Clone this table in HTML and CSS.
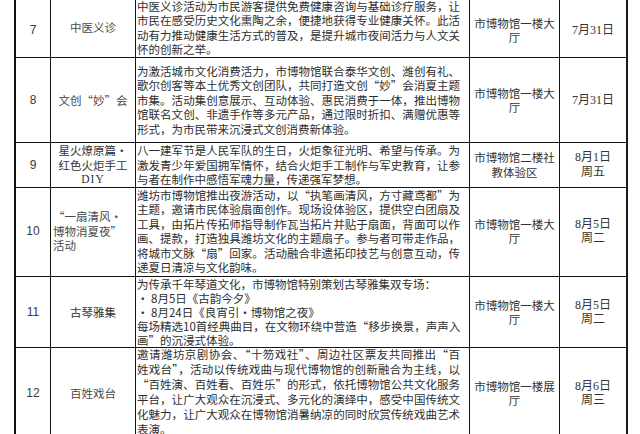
FILE: index.html
```html
<!DOCTYPE html>
<html lang="zh-CN">
<head>
<meta charset="utf-8">
<title>活动安排</title>
<link rel="stylesheet" href="styles.css">
</head>
<body>
<div class="sheet">
  <div class="row r7">
    <div class="c num shift">7</div>
    <div class="c name shift">中医义诊</div>
    <div class="c desc">
      <span class="f">中医义诊活动为市民游客提供免费健康咨询与基础诊疗服务，让</span>
      <span class="f">市民在感受历史文化熏陶之余，便捷地获得专业健康关怀。此活</span>
      <span class="f">动有力推动健康生活方式的普及，是提升城市夜间活力与人文关</span>
      <span>怀的创新之举。</span>
    </div>
    <div class="c loc shift">市博物馆一楼大<br>厅</div>
    <div class="c date shift">7月31日</div>
  </div>
  <div class="row r8">
    <div class="c num">8</div>
    <div class="c name">文创“妙”会</div>
    <div class="c desc">
      <span class="f">为激活城市文化消费活力，市博物馆联合泰华文创、潍创有礼、</span>
      <span class="f">歌尔创客等本土优秀文创团队，共同打造文创“妙”会消夏主题</span>
      <span class="f">市集。活动集创意展示、互动体验、惠民消费于一体，推出博物</span>
      <span class="f">馆联名文创、非遗手作等多元产品，通过限时折扣、满赠优惠等</span>
      <span>形式，为市民带来沉浸式文创消费新体验。</span>
    </div>
    <div class="c loc">市博物馆一楼大<br>厅</div>
    <div class="c date">7月31日</div>
  </div>
  <div class="row r9">
    <div class="c num">9</div>
    <div class="c name serif">星火燎原篇·<br>红色火炬手工<br><span class="latin">DIY</span></div>
    <div class="c desc">
      <span class="f">八一建军节是人民军队的生日，火炬象征光明、希望与传承。为</span>
      <span class="f">激发青少年爱国拥军情怀，结合火炬手工制作与军史教育，让参</span>
      <span>与者在制作中感悟军魂力量，传递强军梦想。</span>
    </div>
    <div class="c loc">市博物馆二楼社<br>教体验区</div>
    <div class="c date">8月1日<br>周五</div>
  </div>
  <div class="row r10">
    <div class="c num">10</div>
    <div class="c name left">“一扇清风·<br>博物消夏夜”<br>活动</div>
    <div class="c desc">
      <span class="f">潍坊市博物馆推出夜游活动，以“执笔画清风，方寸藏鸢都”为</span>
      <span class="f">主题，邀请市民体验扇面创作。现场设体验区，提供空白团扇及</span>
      <span class="f">工具，由拓片传拓师指导制作瓦当拓片并贴于扇面，背面可以作</span>
      <span class="f">画、提款，打造独具潍坊文化的主题扇子。参与者可带走作品，</span>
      <span class="f">将城市文脉“扇”回家。活动融合非遗拓印技艺与创意互动，传</span>
      <span>递夏日清凉与文化韵味。</span>
    </div>
    <div class="c loc">市博物馆一楼大<br>厅</div>
    <div class="c date">8月5日<br>周二</div>
  </div>
  <div class="row r11">
    <div class="c num">11</div>
    <div class="c name serif">古琴雅集</div>
    <div class="c desc">
      <span>为传承千年琴道文化，市博物馆特别策划古琴雅集双专场：</span>
      <span>• 8月5日《古韵今夕》</span>
      <span>• 8月24日《良宵引·博物馆之夜》</span>
      <span class="f">每场精选10首经典曲目，在文物环绕中营造“移步换景，声声入</span>
      <span>画”的沉浸式体验。</span>
    </div>
    <div class="c loc">市博物馆一楼大<br>厅</div>
    <div class="c date">8月5日<br>周二</div>
  </div>
  <div class="row r12">
    <div class="c num">12</div>
    <div class="c name">百姓戏台</div>
    <div class="c desc">
      <span class="f">邀请潍坊京剧协会、“十笏戏社”、周边社区票友共同推出“百</span>
      <span class="f">姓戏台”，活动以传统戏曲与现代博物馆的创新融合为主线，以</span>
      <span class="f">“百姓演、百姓看、百姓乐”的形式，依托博物馆公共文化服务</span>
      <span class="f">平台，让广大观众在沉浸式、多元化的演绎中，感受中国传统文</span>
      <span class="f">化魅力，让广大观众在博物馆消暑纳凉的同时欣赏传统戏曲艺术</span>
      <span>表演。</span>
    </div>
    <div class="c loc">市博物馆一楼展<br>厅</div>
    <div class="c date">8月6日<br>周三</div>
  </div>
</div>
</body>
</html>
```

FILE: styles.css
```css
html, body {
  margin: 0;
  padding: 0;
  background: #ffffff;
}

body {
  font-family: "Noto Sans CJK SC", "Noto Sans", sans-serif;
  color: #2a2a2a;
  overflow: hidden;
}

.sheet {
  margin: -2px 0 0 14px;
  width: 614px;
  box-sizing: border-box;
  border-left: 2px solid #111;
}

.row {
  display: grid;
  grid-template-columns: 35px 85px 334px 90px 68px;
}

.r7 { height: 60px; }
.r8 { height: 85px; }
.r9 { height: 43px; }
.r10 { height: 91px; }
.r11 { height: 70px; }
.r12 { height: 93px; }

.c {
  box-sizing: border-box;
  border-right: 1px solid #141414;
  border-bottom: 1px solid #141414;
  display: flex;
  flex-direction: column;
  justify-content: center;
  align-items: center;
  text-align: center;
  font-size: 11.5px;
  line-height: 14.5px;
  overflow: visible;
  min-width: 0;
}

.c:last-child {
  border-right: 2px solid #1a1a1a;
}

.shift {
  padding-top: 5px;
}

.num {
  font-family: "Liberation Sans", Arial, sans-serif;
  font-size: 12px;
  color: #3a3a3a;
}

.name {
  color: #4a4a4a;
  padding: 0 2px;
}

.name.serif {
  color: #333;
}

.name.left {
  align-items: flex-start;
  text-align: left;
  padding-left: 2px;
}

.latin {
  font-family: "Liberation Serif", serif;
  letter-spacing: 1px;
}

.desc {
  align-items: stretch;
  text-align: left;
  padding: 0 9px 0 1px;
  color: #2e2e2e;
}

.desc span {
  display: block;
  white-space: nowrap;
}

.desc .f {
  text-align: justify;
  text-align-last: justify;
}

.r11 .desc {
  line-height: 14px;
}

.r12 .desc {
  line-height: 15px;
  justify-content: flex-start;
}

.loc {
  color: #333;
}

.date {
  font-family: "Liberation Serif", "Noto Sans CJK SC", serif;
  color: #333;
  font-size: 12px;
}
```
